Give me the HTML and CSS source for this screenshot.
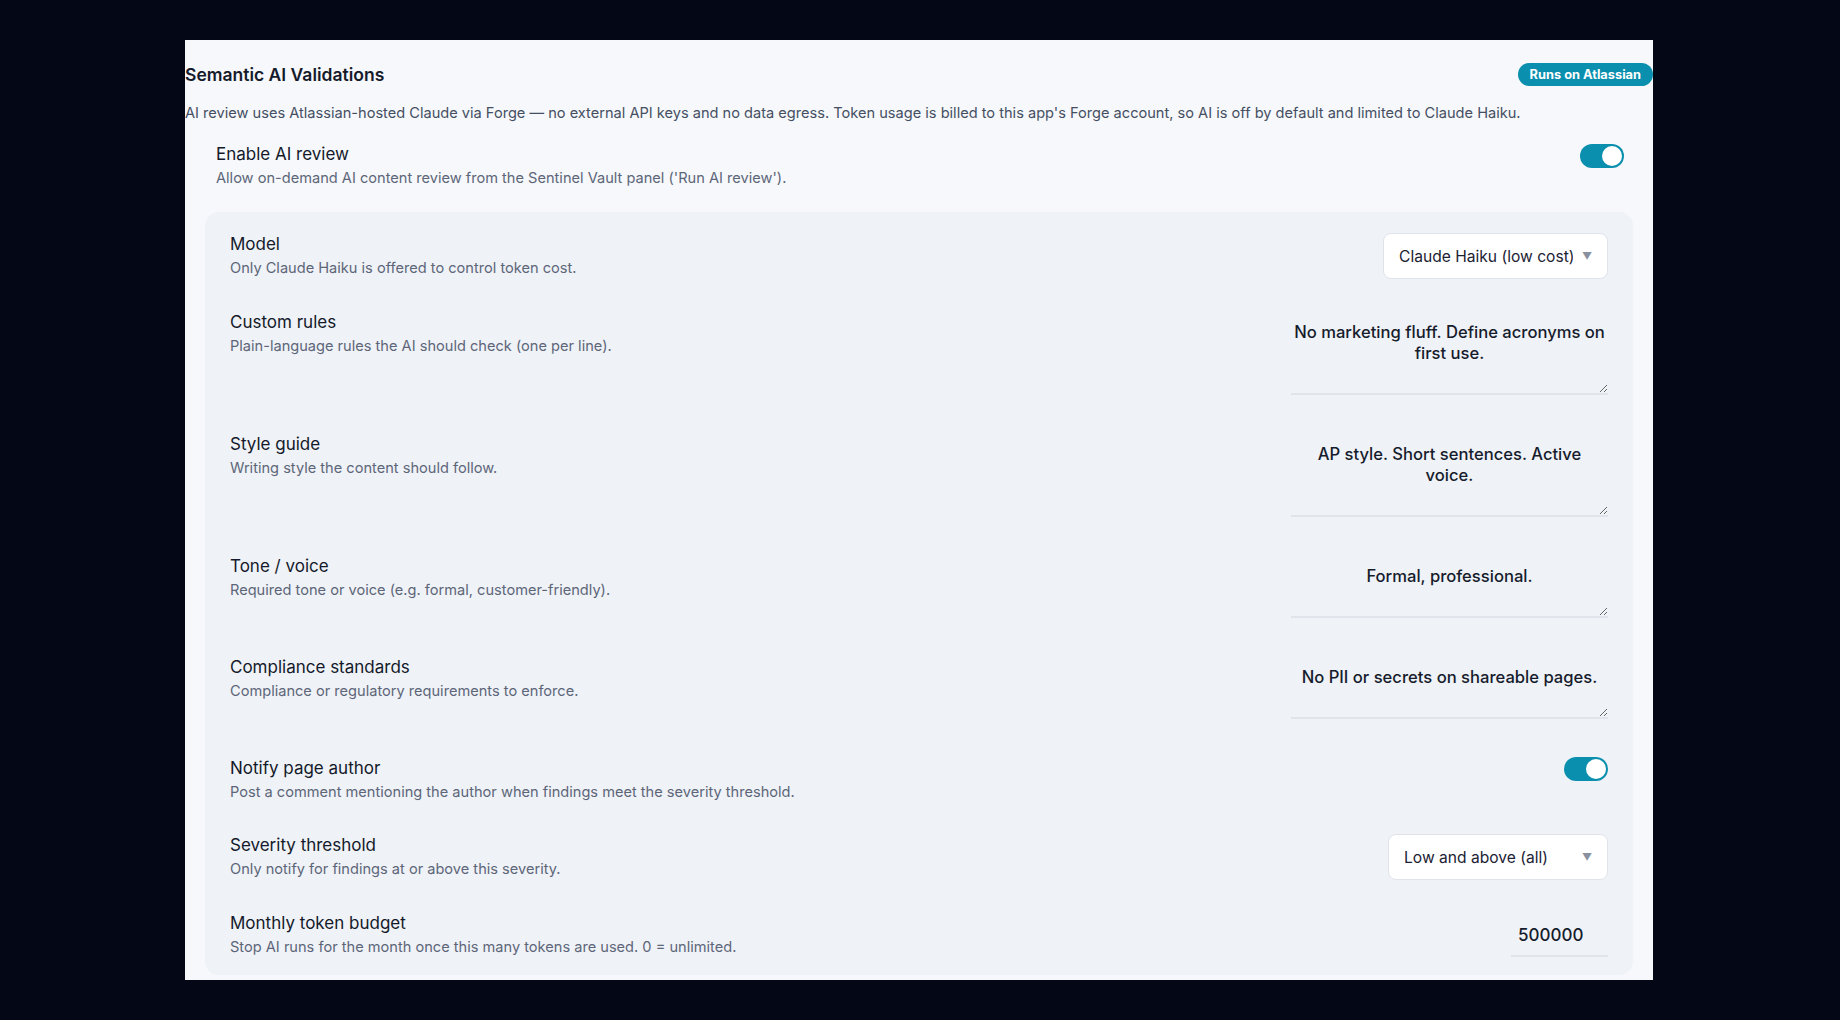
FILE: index.html
```html
<!DOCTYPE html>
<html lang="en">
<head>
    <meta charset="UTF-8">
    <meta name="viewport" content="width=device-width, initial-scale=1.0">
    <title>Semantic AI Validations</title>
    <link rel="stylesheet" href="styles.css">
</head>
<body>
    <div class="frame">
        <div class="section-head">
            <h2 class="section-title">Semantic AI Validations</h2>
            <span class="badge">Runs on Atlassian</span>
        </div>
        <p class="intro">AI review uses Atlassian-hosted Claude via Forge — no external API keys and no data egress. Token usage is billed to this app's Forge account, so AI is off by default and limited to Claude Haiku.</p>

        <div class="setting setting-top">
            <div class="setting-text">
                <div class="setting-label">Enable AI review</div>
                <div class="setting-desc">Allow on-demand AI content review from the Sentinel Vault panel ('Run AI review').</div>
            </div>
            <span class="toggle on"><span class="knob"></span></span>
        </div>

        <div class="card">
            <div class="setting">
                <div class="setting-text">
                    <div class="setting-label">Model</div>
                    <div class="setting-desc">Only Claude Haiku is offered to control token cost.</div>
                </div>
                <div class="select-wrap model-select">
                    <select class="select">
                        <option>Claude Haiku (low cost)</option>
                    </select>
                </div>
            </div>

            <div class="setting">
                <div class="setting-text">
                    <div class="setting-label">Custom rules</div>
                    <div class="setting-desc">Plain-language rules the AI should check (one per line).</div>
                </div>
                <textarea class="area" rows="3">No marketing fluff. Define acronyms on first use.</textarea>
            </div>

            <div class="setting">
                <div class="setting-text">
                    <div class="setting-label">Style guide</div>
                    <div class="setting-desc">Writing style the content should follow.</div>
                </div>
                <textarea class="area" rows="3">AP style. Short sentences. Active voice.</textarea>
            </div>

            <div class="setting">
                <div class="setting-text">
                    <div class="setting-label">Tone / voice</div>
                    <div class="setting-desc">Required tone or voice (e.g. formal, customer-friendly).</div>
                </div>
                <textarea class="area" rows="2">Formal, professional.</textarea>
            </div>

            <div class="setting">
                <div class="setting-text">
                    <div class="setting-label">Compliance standards</div>
                    <div class="setting-desc">Compliance or regulatory requirements to enforce.</div>
                </div>
                <textarea class="area" rows="2">No PII or secrets on shareable pages.</textarea>
            </div>

            <div class="setting">
                <div class="setting-text">
                    <div class="setting-label">Notify page author</div>
                    <div class="setting-desc">Post a comment mentioning the author when findings meet the severity threshold.</div>
                </div>
                <span class="toggle on"><span class="knob"></span></span>
            </div>

            <div class="setting">
                <div class="setting-text">
                    <div class="setting-label">Severity threshold</div>
                    <div class="setting-desc">Only notify for findings at or above this severity.</div>
                </div>
                <div class="select-wrap severity-select">
                    <select class="select">
                        <option>Low and above (all)</option>
                        <option>Medium and above</option>
                        <option>High only</option>
                    </select>
                </div>
            </div>

            <div class="setting">
                <div class="setting-text">
                    <div class="setting-label">Monthly token budget</div>
                    <div class="setting-desc">Stop AI runs for the month once this many tokens are used. 0 = unlimited.</div>
                </div>
                <input class="number" type="text" value="500000">
            </div>
        </div>
    </div>
</body>
</html>
```

FILE: styles.css
```css
/* General */
body {
    margin: 0;
    height: 1020px;
    overflow: hidden;
    background-color: #040816;
    font-family: 'Inter', 'Noto Sans', sans-serif;
    color: #172033;
}

.frame {
    margin: 40px 0 0 185px;
    width: 1468px;
    height: 940px;
    overflow: hidden;
    background-color: #f6f8fb;
}

/* Section heading */
.section-head {
    display: flex;
    justify-content: space-between;
    align-items: center;
    padding-top: 23px;
}

.section-title {
    margin: 0;
    font-size: 17.5px;
    font-weight: 600;
    line-height: 22px;
    color: #161b2b;
}

.badge {
    padding: 0 12px;
    height: 23px;
    line-height: 23px;
    border-radius: 12px;
    background-color: #0b8fae;
    color: #fff;
    font-size: 12.8px;
    font-weight: 700;
}

.intro {
    margin: 17px 0 0;
    font-size: 14.6px;
    line-height: 20px;
    color: #454f63;
}

/* Settings rows */
.setting {
    display: flex;
    justify-content: space-between;
    align-items: flex-start;
}

.setting-top {
    margin-top: 20px;
    padding: 0 29px 0 31px;
}

.setting-top .toggle {
    margin-top: 1px;
}

.setting-label {
    font-size: 17px;
    font-weight: 400;
    line-height: 22px;
    color: #141a2a;
}

.setting-desc {
    margin-top: 3px;
    font-size: 14.6px;
    line-height: 20px;
    color: #5d6679;
}

/* Nested card */
.card {
    display: flex;
    flex-direction: column;
    gap: 32px;
    margin: 24px 20px 0;
    padding: 21px 25px 18px;
    background-color: #eff2f7;
    border-radius: 14px;
}

/* Toggle */
.toggle {
    display: block;
    position: relative;
    width: 44px;
    height: 24px;
    border-radius: 12px;
    background-color: #b8c0cc;
    flex-shrink: 0;
}

.toggle.on {
    background-color: #0b8fae;
}

.knob {
    position: absolute;
    top: 2px;
    left: 2px;
    width: 20px;
    height: 20px;
    border-radius: 50%;
    background-color: #fff;
}

.toggle.on .knob {
    left: 22px;
}

/* Select */
.select-wrap {
    position: relative;
}

.select-wrap::after {
    content: '▼';
    position: absolute;
    right: 16px;
    top: 50%;
    transform: translateY(-50%);
    font-size: 10px;
    line-height: 12px;
    color: #8a919e;
    pointer-events: none;
}

.select {
    appearance: none;
    -webkit-appearance: none;
    width: 100%;
    height: 46px;
    padding: 0 34px 0 15px;
    font-family: inherit;
    font-size: 15.6px;
    color: #1b2233;
    background-color: #fff;
    border: 1px solid #e0e4ea;
    border-radius: 8px;
    outline: none;
}

.model-select {
    width: 225px;
}

.severity-select {
    width: 220px;
}

/* Text areas */
.area {
    display: block;
    width: 317px;
    margin-bottom: 6px;
    padding: 11px 3px 8px;
    box-sizing: border-box;
    font-family: inherit;
    font-size: 16.6px;
    font-weight: 500;
    line-height: 21px;
    text-align: center;
    color: #161c2c;
    background: transparent;
    border: none;
    border-bottom: 2px solid #e1e5eb;
    outline: none;
    resize: vertical;
}

/* Number input */
.number {
    width: 97px;
    height: 45px;
    padding: 2px 7px 0;
    box-sizing: border-box;
    font-family: inherit;
    font-size: 17px;
    font-weight: 500;
    color: #161c2c;
    background: transparent;
    border: none;
    border-bottom: 2px solid #e1e5eb;
    outline: none;
}
```
